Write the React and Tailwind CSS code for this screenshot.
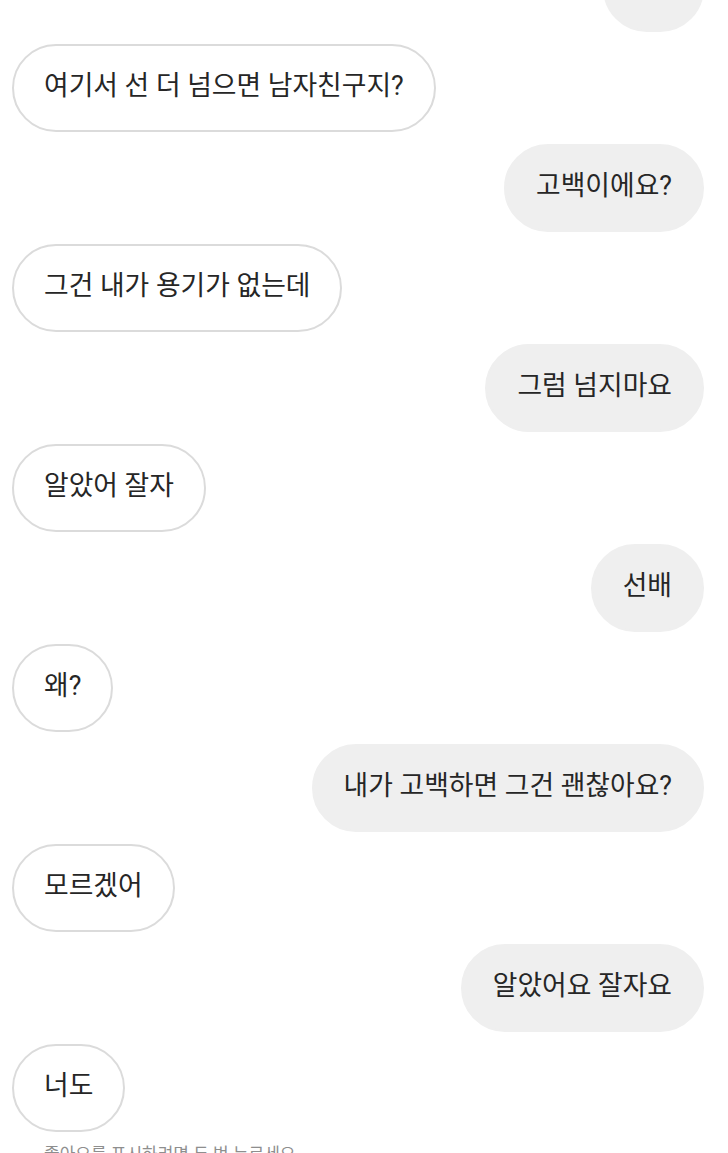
export default function App() {
  const msgs = [
    { me: true, t: "네?" },
    { me: false, t: "여기서 선 더 넘으면 남자친구지?" },
    { me: true, t: "고백이에요?" },
    { me: false, t: "그건 내가 용기가 없는데" },
    { me: true, t: "그럼 넘지마요" },
    { me: false, t: "알았어 잘자" },
    { me: true, t: "선배" },
    { me: false, t: "왜?" },
    { me: true, t: "내가 고백하면 그건 괜찮아요?" },
    { me: false, t: "모르겠어" },
    { me: true, t: "알았어요 잘자요" },
    { me: false, t: "너도" },
  ];
  return (
    <div
      className="w-[728px] h-[1153px] overflow-hidden bg-white"
      style={{ fontFamily: "Roboto, 'Noto Sans CJK KR', sans-serif" }}
    >
      <div className="flex flex-col gap-[12px] pl-[12px] pr-[24px] -mt-[56px]">
        {msgs.map((m, i) => (
          <div key={i} className={m.me ? "flex justify-end" : "flex justify-start"}>
            <div
              className={
                "rounded-full border-2 px-[30px] pt-[22px] pb-[26px] text-[26.8px] leading-[36px] text-[#262626] whitespace-nowrap " +
                (m.me ? "bg-[#efefef] border-[#efefef]" : "bg-white border-[#dbdbdb]")
              }
            >
              {m.t}
            </div>
          </div>
        ))}
      </div>
      <div className="pl-[44px] pt-[10px] text-[17px] leading-[24px] text-[#8e8e8e]">
        좋아요를 표시하려면 두 번 누르세요
      </div>
    </div>
  );
}
